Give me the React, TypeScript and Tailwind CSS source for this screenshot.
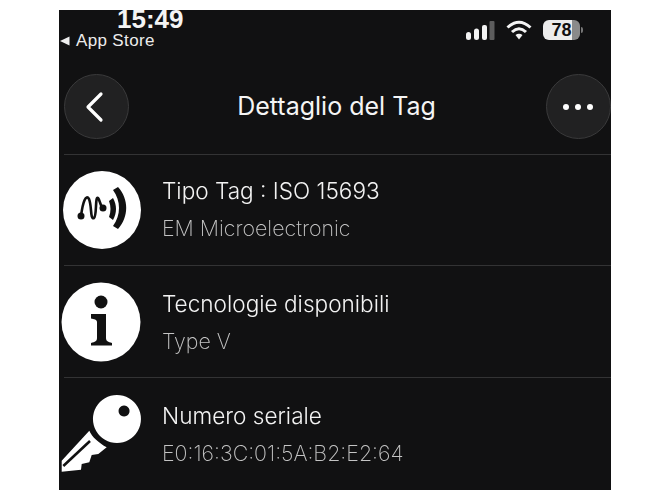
export default function App() {
  return (
    <div className="w-[670px] h-[500px] bg-white pt-[10px] pl-[59px] font-['Inter',sans-serif]">
      <div className="w-[552px] h-[480px] bg-[#111112] flex flex-col text-white">
        {/* status bar */}
        <div className="h-[54px] flex justify-between shrink-0">
          <div className="flex flex-col">
            <div className="ml-[58px] h-[19px] text-[26px] leading-[19px] font-semibold text-[#f4f4f4] font-['Liberation_Sans',sans-serif]">15:49</div>
            <div className="flex items-center mt-[3px] h-[18px]">
              <svg width="10" height="10" viewBox="0 0 10 10" className="ml-[1px]"><path d="M0 5 L9.5 0.5 V9.5 Z" fill="#eee" /></svg>
              <span className="ml-[6px] text-[17px] leading-[18px] text-[#ececec] tracking-[0.35px] font-['Liberation_Sans',sans-serif]">App Store</span>
            </div>
          </div>
          <div className="flex items-start pt-[11px] pr-[28px] gap-[11px]">
            <svg width="29" height="19" viewBox="0 0 29 19">
              <rect x="0" y="11" width="5" height="8" rx="2.5" fill="#f2f2f2" />
              <rect x="8" y="7.500" width="5" height="11.500" rx="2.5" fill="#f2f2f2" />
              <rect x="16" y="4" width="5" height="15" rx="2" fill="#f2f2f2" />
              <rect x="23.5" y="0" width="5" height="19" rx="1" fill="#5d5d5d" />
            </svg>
            <svg width="26" height="20" viewBox="0 0 26 20" className="mt-[-1px]">
              <path d="M1.5 7.5 Q13 -3 24.500 7.500" fill="none" stroke="#f4f4f4" strokeWidth="3" />
              <path d="M6 12 Q13 5.500 20 12" fill="none" stroke="#f4f4f4" strokeWidth="3" />
              <path d="M9.500 15 Q13 12.500 16.500 15 L13 19.500 Z" fill="#f4f4f4" />
            </svg>
            <div className="flex items-center mt-[-1px]">
              <div className="w-[37px] h-[20px] rounded-[6px] bg-[linear-gradient(90deg,#ececec_0,#ececec_78%,#8a8a8a_78%,#8a8a8a_100%)] flex items-center justify-center text-[#111] text-[18px] leading-none font-bold font-['Liberation_Sans',sans-serif]">78</div>
              <div className="w-[2px] h-[6px] ml-[1px] rounded-r-[2px] bg-[#777]" />
            </div>
          </div>
        </div>

        {/* nav */}
        <div className="h-[90px] shrink-0 flex items-start justify-between pl-[5px] pt-[10px]">
          <div className="w-[65px] h-[65px] rounded-full bg-[#212122] border border-[#3a3a3b] flex items-center justify-center">
            <svg width="20" height="32" viewBox="0 0 20 32" className="-ml-[6px]"><path d="M17 3 L4 16 L17 29" fill="none" stroke="#fff" strokeWidth="3.2" strokeLinecap="round" strokeLinejoin="round" /></svg>
          </div>
          <div className="text-[25px] leading-[30px] mt-[17px] -ml-[2px] text-[#f5f5f5] font-normal">Dettaglio del Tag</div>
          <div className="w-[65px] h-[65px] rounded-full bg-[#212122] border border-[#3a3a3b] flex items-center justify-center gap-[6px]">
            <span className="w-[6px] h-[6px] rounded-full bg-white" />
            <span className="w-[6px] h-[6px] rounded-full bg-white" />
            <span className="w-[6px] h-[6px] rounded-full bg-white" />
          </div>
        </div>

        {/* rows */}
        <Row title="Tipo Tag : ISO 15693" sub="EM Microelectronic" cls="h-[111px]" textCls="-mt-[2px]" icon={
          <svg width="78" height="78" viewBox="0 0 78 78" className="ml-[4px]">
            <circle cx="39" cy="39" r="39" fill="#fff" />
            <circle cx="18" cy="45" r="3.500" fill="#111" />
            <circle cx="40" cy="37" r="3.500" fill="#111" />
            <path d="M18 45 C20 30 23 23 26 28 C29 35 27 49 31 47 C34 45 32 24 35 27 C37 29 37 35 40 37" fill="none" stroke="#111" strokeWidth="2.600" strokeLinecap="round" />
            <path d="M46 30 L50 27 C54 34 54 42 50 49 L46 46 C48 41 48 35 46 30 Z" fill="#111" />
            <path d="M50 19 L55 16 C66 28 66 46 55 58 L50 55 C58 44 58 30 50 19 Z" fill="#111" />
          </svg>
        } />
        <Row title="Tecnologie disponibili" sub="Type V" cls="h-[112px]" textCls="mt-0" icon={
          <svg width="80" height="80" viewBox="0 0 80 80" className="ml-[2px]">
            <circle cx="40" cy="40" r="39.500" fill="#fff" />
            <circle cx="40" cy="20" r="6.500" fill="#111" />
            <path d="M30 32 H45 V56 C45 59 47 60 51 61 V63.500 H30 V61 C34 60 36 59 36 56 V40 C36 37.500 33 37 30 36.500 Z" fill="#111" />
          </svg>
        } />
        <Row title="Numero seriale" sub="E0:16:3C:01:5A:B2:E2:64" cls="h-[113px]" textCls="-mt-[1px]" icon={
          <svg width="82" height="86" viewBox="0 0 82 86" className="ml-[2px] mt-[4px]">
            <path fillRule="evenodd" d="M56 2 A24 24 0 1 1 55.900 2 Z M63 12.500 A5.500 5.500 0 1 0 63.100 12.500 Z" fill="#fff" />
            <path d="M28.300 37.700 C31 44 38 50 45.700 54.300 L37.300 61 L30.700 62 L28.300 69.300 L20.700 71 L20 76.700 L0.700 78.700 V67.700 Z" fill="#fff" />
            <path d="M2.300 73 L29 48" stroke="#111" strokeWidth="2.600" />
          </svg>
        } />
      </div>
    </div>
  );
}

function Row({ title, sub, icon, cls, textCls }: { title: string; sub: string; icon: React.ReactNode; cls: string; textCls: string }) {
  return (
    <div className={`ml-[5px] border-t border-[#333334] flex items-center ${cls}`}>
      <div className="w-[103px] -ml-[5px] shrink-0 flex items-center">{icon}</div>
      <div className={`flex flex-col gap-[10px] ${textCls}`}>
        <div className="text-[22.6px] leading-[28px] font-light text-[#f3f3f3] [will-change:transform]">{title}</div>
        <div className="text-[21.4px] leading-[26px] font-extralight text-[#c4c4c4] [will-change:transform]">{sub}</div>
      </div>
    </div>
  );
}
